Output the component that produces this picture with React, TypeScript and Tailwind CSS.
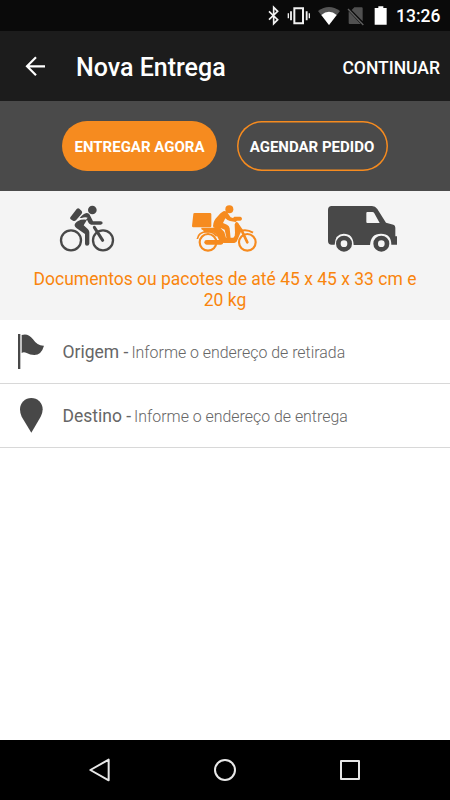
import type { ReactNode } from "react";

function StatusBar() {
  return (
    <div className="flex h-[31px] items-center justify-end bg-[#0a0a0a] pr-2.5">
      <div className="flex h-full items-center">
        <svg width="14" height="31" viewBox="0 0 42 93" fill="none" stroke="#f2f2f2" strokeWidth="5">
          <path d="M6 34l26 25-12 12V22l12 12L6 59" />
        </svg>
        <svg width="24" height="31" viewBox="0 0 72 93" className="ml-[6px]" fill="none" stroke="#f2f2f2">
          <path d="M22 25h26v45H22z" strokeWidth="6" />
          <path d="M12 34v27M59 34v27" strokeWidth="5.5" />
          <path d="M4 40v15M67 40v15" strokeWidth="4" />
        </svg>
        <svg width="22" height="31" viewBox="0 0 66 93" className="ml-[7px]">
          <path d="M0 33Q33 9 66 33L33 75z" fill="#555" />
          <path d="M10 45Q33 26 56 45L33 75z" fill="#fff" />
        </svg>
        <svg width="18" height="31" viewBox="0 0 54 93" className="ml-[7px]">
          <path d="M22 22h22q3 0 3 3v39L14 30zM5 34l36 38H8q-3 0-3-3z" fill="#505050" />
          <path d="M3 27l46 48" stroke="#606060" strokeWidth="4" />
        </svg>
        <svg width="14" height="31" viewBox="0 0 42 93" className="ml-[9px]">
          <path d="M13 19h15v5h10v50H2V24h11z" fill="#fff" />
        </svg>
      </div>
      <span className="ml-[8px] mt-0.5 w-[44px] whitespace-nowrap text-[17.5px] font-medium leading-[31px] text-white">13:26</span>
    </div>
  );
}

function Header() {
  return (
    <header className="flex h-[70px] items-center justify-between bg-[#1c1c1c] pl-[25px] pr-[10px] text-white">
      <div className="flex items-center">
        <svg width="21" height="22" viewBox="0 0 63 66" fill="none" stroke="#fff" strokeWidth="6.5">
          <path d="M60 34H5M33 7L6 34l27 27" />
        </svg>
        <h1 className="ml-[30px] mt-1 whitespace-nowrap text-[25px] font-medium leading-8">Nova Entrega</h1>
      </div>
      <button className="mt-1 whitespace-nowrap text-[17.5px] font-medium">CONTINUAR</button>
    </header>
  );
}

function BikeIcon() {
  return (
    <svg width="75" height="65" viewBox="0 0 225 195" fill="none" stroke="#484848" strokeWidth="7">
      <circle cx="63" cy="136" r="30" />
      <circle cx="159" cy="136" r="30" />
      <circle cx="127" cy="45" r="13" fill="#484848" stroke="none" />
      <path d="M61 67l19-25q4-4 8-1l7 7q3 4 0 8L78 76q-4 4-9 1l-7-4q-3-3-1-6z" fill="#484848" stroke="none" />
      <path d="M89 69q11-14 21-15 8 0 11 9l8 16h23q6 1 6 5t-6 5h-28q-6-1-8-5l-5-10-10 17 13 12q4 4 4 9v34q-1 6-7 6t-6-6v-29l-25-17q-10-8-4-15 4-6 10-8 7-4 22-3l5-6q-8-3-18 1z" fill="#484848" stroke="none" />
      <path d="M133 97l25 39" strokeWidth="9" strokeLinecap="round" />
    </svg>
  );
}

function MotorcycleIcon() {
  return (
    <svg width="80" height="65" viewBox="0 0 240 195" fill="none" stroke="#f68b1f" strokeWidth="6.5">
      <path d="M29 54h46q4 0 4 4v36q0 3-4 3H25q-4 0-4-4l4-36q0-3 4-3z" fill="#f68b1f" stroke="none" />
      <circle cx="133" cy="43" r="12" fill="#f68b1f" stroke="none" />
      <path d="M84 93q1-17 13-28 10-12 18-16 10-4 15 8l7 10 7 2 4-4h18q5 1 5 6t-5 6h-10l-4 4-17-3q-8-1-14-8l-7 14 12 5q7 4 8 11l3 31h-12l-6-27-12-5H92q-8 1-8-6z" fill="#f68b1f" stroke="none" />
      <path d="M49 98h57l12 13 5 17h22q6-6 5-15l-1-25q1-5 6-5t6 5l7 22-4 9-7 17q-2 8-9 8h-32q-9 0-14-9l-7-14q-5-9-16-9H58q-3-8-9-9z" fill="#f68b1f" stroke="none" />
      <circle cx="69" cy="142" r="25" />
      <path d="M65 142h43" strokeWidth="14" strokeLinecap="round" />
      <path d="M37 132q3-21 30-22 18 0 28 14" strokeWidth="5" />
      <circle cx="187" cy="142" r="25" />
      <path d="M155 85l15 21 17 36" strokeWidth="8" strokeLinecap="round" />
      <path d="M166 108q20-6 38 5" strokeWidth="6" />
    </svg>
  );
}

function VanIcon() {
  return (
    <svg width="85" height="65" viewBox="0 0 255 195" fill="#484848">
      <path d="M35 33h121q10 0 16 9l26 41 22 6q6 2 6 9v26h5v25h-17q0-33-31-33t-33 34H101q-1-34-30-34-25 0-27 33h-9q-11 0-11-11V45q0-12 11-12zM142 51q-3 0-3 3v27q0 3 3 3h37l-16-29q-2-4-6-4z" fillRule="evenodd" />
      <circle cx="72" cy="146" r="17" fill="none" stroke="#484848" strokeWidth="14" />
      <circle cx="184" cy="146" r="17" fill="none" stroke="#484848" strokeWidth="14" />
    </svg>
  );
}

function AddressRow({ icon, label, hint }: { icon: ReactNode; label: string; hint: string }) {
  return (
    <div className="flex h-16 items-center border-b border-[#d8d8d8]">
      <div className="w-[62.5px]">{icon}</div>
      <p className="mt-0.5 flex items-baseline whitespace-nowrap text-[#666]">
        <span className="text-[17.5px]">{label} -</span>
        <span className="ml-[3px] text-[15.9px] font-light">{hint}</span>
      </p>
    </div>
  );
}

export default function App() {
  return (
    <div className="flex h-[800px] w-[450px] flex-col overflow-hidden bg-white font-[Roboto,sans-serif]">
      <StatusBar />
      <Header />

      <div className="flex h-[90px] items-center gap-5 bg-[#4a4a4a] pl-[62px] text-[15px] font-bold text-white">
        <button className="h-[50px] w-[155px] whitespace-nowrap rounded-full bg-[#f68b1f] pt-0.5">ENTREGAR AGORA</button>
        <button className="h-[50px] w-[151px] whitespace-nowrap rounded-full pt-0.5 pr-px shadow-[inset_0_0_0_1.5px_#f68b1f]">AGENDAR PEDIDO</button>
      </div>

      <div className="h-[129px] bg-[#f4f4f4] pt-1">
        <div className="flex pl-[50px]">
          <BikeIcon />
          <div className="ml-[60px]">
            <MotorcycleIcon />
          </div>
          <div className="ml-[55px]">
            <VanIcon />
          </div>
        </div>
        <p className="mt-[9px] whitespace-nowrap text-center text-[17.5px] leading-[20.5px] text-[#f9850d]">
          Documentos ou pacotes de até 45 x 45 x 33 cm e
          <br />
          20 kg
        </p>
      </div>

      <main className="flex-1">
        <AddressRow
          label="Origem"
          hint="Informe o endereço de retirada"
          icon={
            <svg width="50" height="63" viewBox="0 0 150 189" fill="#484848">
              <path d="M54 42h7v105h-7zM65 45q19-7 34 13 13 20 33 19-8 28-29 28-13 0-23-6-9-4-15 0z" />
            </svg>
          }
        />
        <AddressRow
          label="Destino"
          hint="Informe o endereço de entrega"
          icon={
            <svg width="50" height="63" viewBox="0 0 150 189" fill="#484848">
              <path d="M94 146L65 98Q60 88 60 76a34 34 0 0 1 68 0q0 11-6 22z" />
            </svg>
          }
        />
      </main>

      <nav className="flex h-[60px] items-center justify-between bg-black px-[88px]">
        <svg width="24" height="26" viewBox="0 0 72 78" fill="none" stroke="#e8e8e8" strokeWidth="6" strokeLinejoin="round">
          <path d="M62 8v62L7 39z" />
        </svg>
        <svg width="24" height="24" viewBox="0 0 72 72" fill="none" stroke="#e8e8e8" strokeWidth="6">
          <circle cx="36" cy="36" r="30" />
        </svg>
        <svg width="24" height="24" viewBox="0 0 72 72" fill="none" stroke="#e8e8e8" strokeWidth="6" strokeLinejoin="round">
          <path d="M9 9h54v54H9z" />
        </svg>
      </nav>
    </div>
  );
}
